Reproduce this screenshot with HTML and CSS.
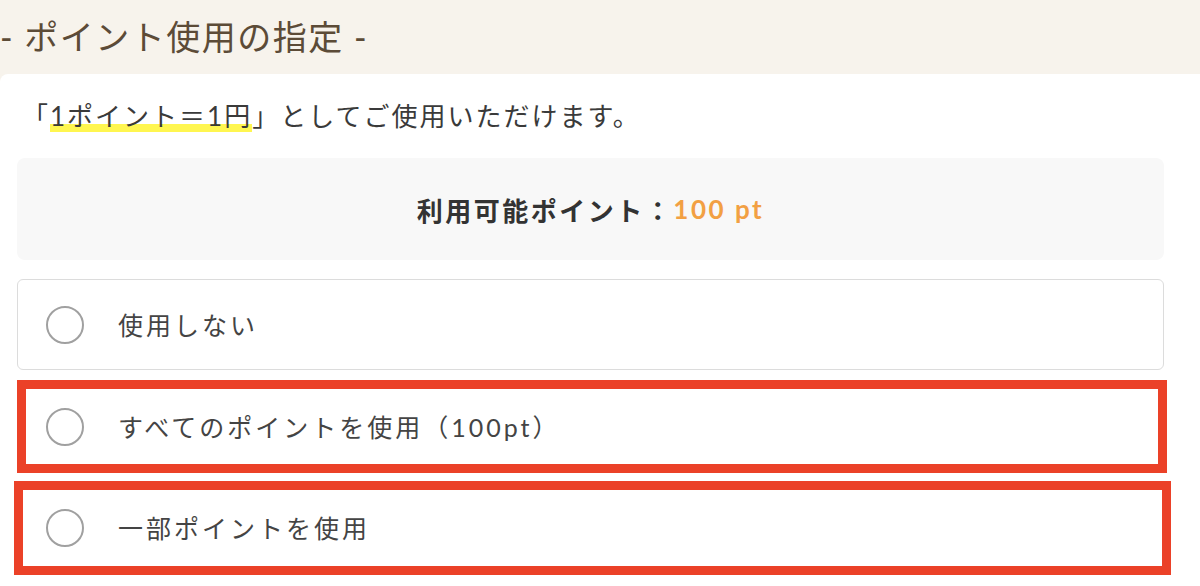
FILE: index.html
```html
<!DOCTYPE html>
<html lang="ja">
<head>
<meta charset="utf-8">
<title>ポイント使用の指定</title>
<link rel="stylesheet" href="styles.css">
</head>
<body>
<header class="section-head">
  <h2 class="section-title">- ポイント使用の指定 -</h2>
</header>
<main class="panel">
  <p class="note">「<span class="marker">1ポイント＝1円</span>」としてご使用いただけます。</p>
  <div class="available">
    <span class="available-label">利用可能ポイント：</span><span class="available-value">100 pt</span>
  </div>
  <ul class="options">
    <li class="option option-plain">
      <span class="radio"></span>
      <span class="option-label">使用しない</span>
    </li>
    <li class="option option-marked option-all">
      <span class="radio"></span>
      <span class="option-label">すべてのポイントを使用（100pt）</span>
    </li>
    <li class="option option-marked option-part">
      <span class="radio"></span>
      <span class="option-label">一部ポイントを使用</span>
    </li>
  </ul>
</main>
</body>
</html>
```

FILE: styles.css
```css
* {
  box-sizing: border-box;
}

html, body {
  margin: 0;
  padding: 0;
}

body {
  width: 1200px;
  height: 586px;
  overflow: hidden;
  background: #f7f3ec;
  font-family: "Lato", "Noto Sans CJK JP", sans-serif;
  color: #3a3a3a;
}

.section-head {
  height: 74px;
}

.section-title {
  margin: 0;
  font-size: 34px;
  font-weight: 400;
  line-height: 74px;
  letter-spacing: 1.5px;
  color: #5c4b37;
  white-space: nowrap;
}

.panel {
  background: #ffffff;
  border-top-left-radius: 8px;
  min-height: 512px;
  padding: 22px 36px 0 17px;
}

.note {
  margin: 0 0 22px 5px;
  font-size: 26px;
  line-height: 40px;
  letter-spacing: 2px;
  color: #3a3a3a;
  white-space: nowrap;
}

.marker {
  background: linear-gradient(to bottom, transparent 24px, #fff650 24px, #fff650 37px, transparent 37px);
}

.available {
  height: 102px;
  border-radius: 8px;
  background: #f8f8f8;
  display: flex;
  align-items: center;
  justify-content: center;
  font-size: 26px;
  font-weight: 700;
  letter-spacing: 2.5px;
}

.available-label {
  color: #333333;
}

.available-value {
  color: #f2a043;
}

.options {
  list-style: none;
  margin: 19px 0 0;
  padding: 0;
  display: flex;
  flex-direction: column;
}

.option {
  display: flex;
  align-items: center;
  gap: 34px;
  background: #ffffff;
}

.option-plain {
  height: 91px;
  border: 1px solid #dcdcdc;
  border-radius: 6px;
  padding-left: 28px;
}

.option-marked {
  border: 9px solid #eb4128;
}

.option-all {
  height: 93px;
  margin: 10px -3px 0 0;
  padding-left: 20px;
}

.option-part {
  height: 94px;
  margin: 8px -7px 0 -3px;
  padding-left: 23px;
}

.radio {
  flex: none;
  width: 38px;
  height: 38px;
  border: 2px solid #a0a0a0;
  border-radius: 50%;
  background: #ffffff;
}

.option-label {
  font-size: 25px;
  line-height: 36px;
  letter-spacing: 3px;
  color: #444444;
  white-space: nowrap;
}
```
